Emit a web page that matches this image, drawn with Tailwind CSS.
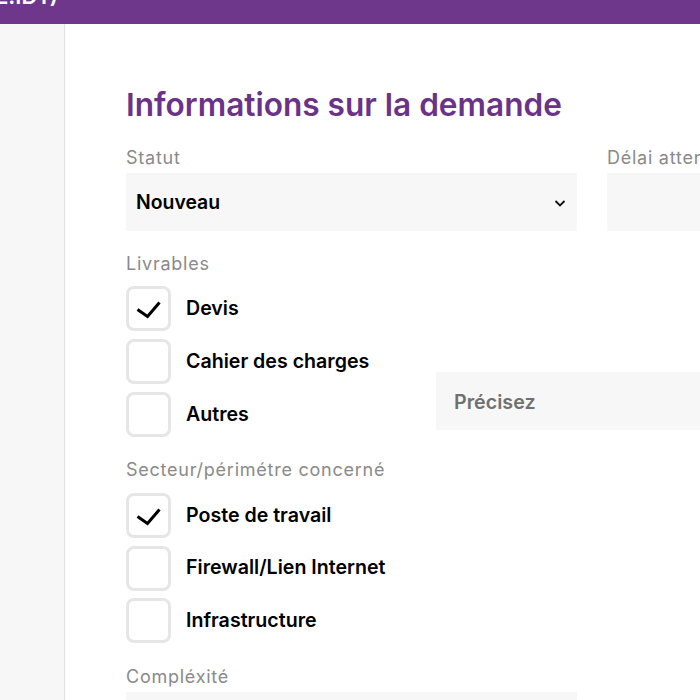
<!DOCTYPE html>
<html lang="fr">
<head>
  <meta charset="UTF-8" />
  <title>Informations sur la demande</title>
  <script src="https://cdn.jsdelivr.net/npm/@tailwindcss/browser@4"></script>
</head>
<body class="bg-white font-['Inter',sans-serif] h-[700px] w-[700px] overflow-hidden">
  <header class="bg-[#6f378b] h-6 overflow-hidden">
    <p class="-mt-[17px] -ml-[6px] text-white font-semibold text-[22px] leading-[26px] whitespace-nowrap [word-spacing:-7px]">Z.IDT )</p>
  </header>

  <div class="flex h-[676px] overflow-hidden">
    <aside class="w-[65px] shrink-0 bg-[#f7f7f7] border-r border-[#e0e0e0]"></aside>

    <main class="pl-[61px] pt-[62px] w-[635px] shrink-0 overflow-hidden">
      <h1 class="text-[#6b3289] font-semibold text-[31.6px] leading-[38px] mb-[22px] whitespace-nowrap">Informations sur la demande</h1>

      <div class="grid grid-cols-[451px_451px] gap-x-[30px]">
        <div>
          <label class="block text-[#8a8a8a] text-[18px] leading-[24px] tracking-[0.75px] mb-[3px]">Statut</label>
          <div class="bg-[#f7f7f7] h-[58px] flex items-center justify-between pl-[10px] pr-[11px] pt-[2px] text-black font-semibold text-[19.4px]">
            <span>Nouveau</span>
            <svg class="w-3 h-3" viewBox="0 0 12 12" fill="none" stroke="#111" stroke-width="1.8"><path d="M1.5 4l4.5 4.5L10.5 4"/></svg>
          </div>
        </div>
        <div>
          <label class="block text-[#8a8a8a] text-[18px] leading-[24px] tracking-[0.75px] mb-[3px] whitespace-nowrap">Délai attendu</label>
          <div class="bg-[#f7f7f7] h-[58px]"></div>
        </div>
      </div>

      <label class="block text-[#8a8a8a] text-[18px] leading-[24px] tracking-[0.75px] mt-[21px] mb-[10px]">Livrables</label>
      <div class="flex">
        <div class="w-[310px] shrink-0 flex flex-col gap-2">
          <div class="flex items-center gap-[15px] h-[45px] text-black font-semibold text-[19.6px]">
            <span class="w-[45px] h-[45px] border-[3px] border-[#e6e6e6] rounded-[8px] flex items-center justify-center">
              <svg class="w-[26px] h-[26px]" viewBox="0 0 26 26" fill="none" stroke="#000" stroke-width="3"><path d="M1.5 13.5l10 7L23.5 6.5"/></svg>
            </span>
            Devis
          </div>
          <div class="flex items-center gap-[15px] h-[45px] text-black font-semibold text-[19.6px]">
            <span class="w-[45px] h-[45px] border-[3px] border-[#e6e6e6] rounded-[8px]"></span>
            Cahier des charges
          </div>
          <div class="flex items-center gap-[15px] h-[45px] text-black font-semibold text-[19.6px]">
            <span class="w-[45px] h-[45px] border-[3px] border-[#e6e6e6] rounded-[8px]"></span>
            Autres
          </div>
        </div>
        <div class="w-[451px] shrink-0 bg-[#f7f7f7] h-[58px] mt-[86px] pl-[18px] pt-[3px] flex items-center text-[#707070] font-semibold text-[19.7px]">Précisez</div>
      </div>

      <label class="block text-[#8a8a8a] text-[18px] leading-[24px] tracking-[0.75px] mt-[21px] mb-[11px]">Secteur/périmétre concerné</label>
      <div class="w-[310px] flex flex-col gap-[7.5px]">
        <div class="flex items-center gap-[15px] h-[45px] text-black font-semibold text-[19.6px]">
          <span class="w-[45px] h-[45px] border-[3px] border-[#e6e6e6] rounded-[8px] flex items-center justify-center">
            <svg class="w-[26px] h-[26px]" viewBox="0 0 26 26" fill="none" stroke="#000" stroke-width="3"><path d="M1.5 13.5l10 7L23.5 6.5"/></svg>
          </span>
          Poste de travail
        </div>
        <div class="flex items-center gap-[15px] h-[45px] text-black font-semibold text-[19.6px]">
          <span class="w-[45px] h-[45px] border-[3px] border-[#e6e6e6] rounded-[8px]"></span>
          Firewall/Lien Internet
        </div>
        <div class="flex items-center gap-[15px] h-[45px] text-black font-semibold text-[19.6px]">
          <span class="w-[45px] h-[45px] border-[3px] border-[#e6e6e6] rounded-[8px]"></span>
          Infrastructure
        </div>
      </div>

      <label class="block text-[#8a8a8a] text-[18px] leading-[24px] tracking-[0.75px] mt-[22px] mb-[3px]">Compléxité</label>
      <div class="bg-[#f7f7f7] w-[451px] h-[58px]"></div>
    </main>
  </div>
</body>
</html>
